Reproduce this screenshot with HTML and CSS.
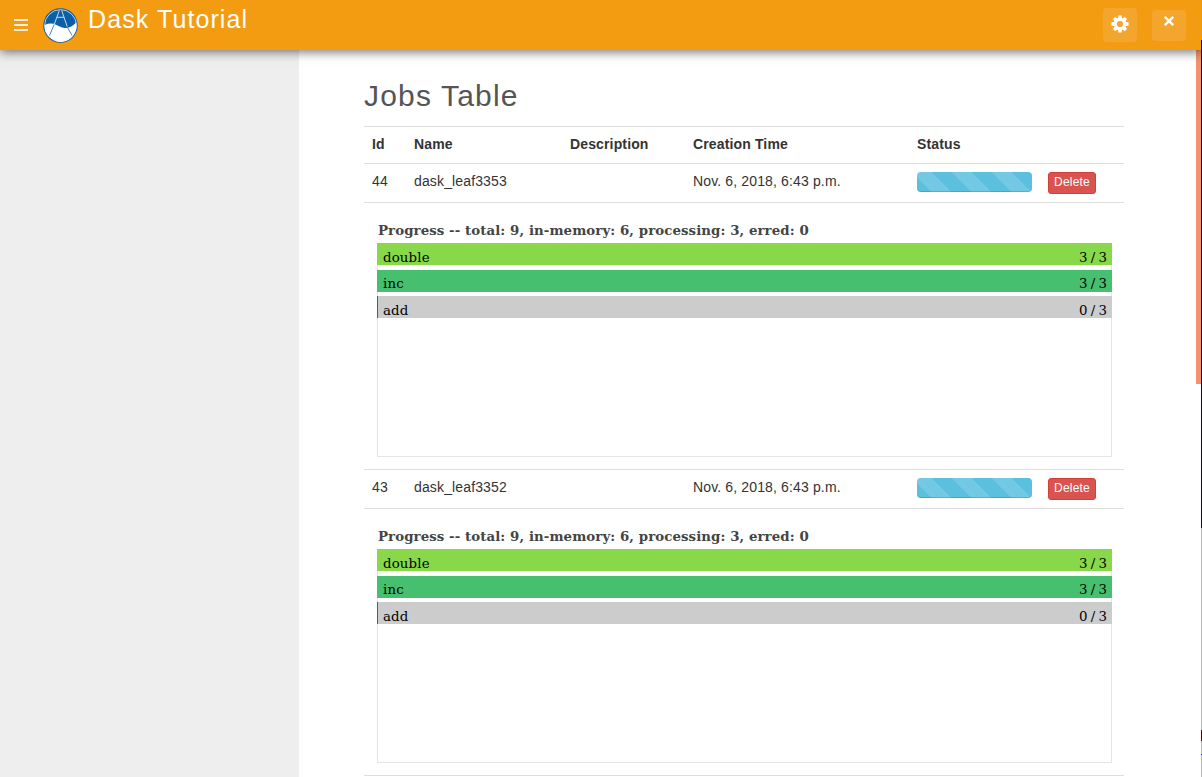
FILE: index.html
```html
<!DOCTYPE html>
<html lang="en">
<head>
<meta charset="utf-8">
<title>Dask Tutorial</title>
<link rel="stylesheet" href="styles.css">
</head>
<body>
<header class="topbar">
  <svg class="menu" width="14" height="12" viewBox="0 0 14 12"><path d="M0 0h14v2H0zM0 5h14v2H0zM0 10h14v2H0z" fill="#f5eedd"/></svg>
  <svg class="logo" width="35" height="35" viewBox="0 0 35 35">
    <circle cx="17.5" cy="17.5" r="17.2" fill="#0b5ea8"/>
    <circle cx="17.5" cy="17.5" r="15.9" fill="#0b5ea8" stroke="#e6eff6" stroke-width=".8"/>
    <path d="M1.6 17Q8 14.2 13.5 17T22 20Q28 20 33.2 14.5A16 16 0 1 1 1.6 17z" fill="#fff"/>
    <path d="M16.3 2.5 11.2 16.5M18.7 2.5 24.2 18.5M14 9.3h7" stroke="#c7dcec" stroke-width="1" fill="none"/>
    <path d="M11.2 16.5 6.5 27.5M24 18.5 29 27.5" stroke="#4a88bd" stroke-width="1" fill="none"/>
  </svg>
  <h1 class="brand">Dask Tutorial</h1>
  <button class="tool settings" aria-label="Settings"><svg width="18" height="18" viewBox="-9 -9 18 18"><g fill="#fff"><path d="M-1.7-8.6h3.4L2.2 0h-4.4zM-1.7 8.6h3.4L2.2 0h-4.4zM-8.6-1.7v3.4L0 2.2v-4.4zM8.6-1.7v3.4L0 2.2v-4.4z"/><path transform="rotate(45)" d="M-1.7-8.4h3.4L2.2 0h-4.4zM-1.7 8.4h3.4L2.2 0h-4.4zM-8.4-1.7v3.4L0 2.2v-4.4zM8.4-1.7v3.4L0 2.2v-4.4z"/><circle r="6.2"/></g><circle r="3.1" fill="#f4a52d"/></svg></button>
  <button class="tool close" aria-label="Close"><svg width="10" height="10" viewBox="0 0 10 10"><path d="M.8.8l8.4 8.4M9.2.8.8 9.2" stroke="#fff" stroke-width="2.3"/></svg></button>
</header>
<div class="page">
  <aside class="sidebar"></aside>
  <main class="content">
    <h2 class="title">Jobs Table</h2>
    <table class="jobs">
      <colgroup><col class="c-id"><col class="c-name"><col class="c-desc"><col class="c-time"><col class="c-status"><col></colgroup>
      <thead><tr><th>Id</th><th>Name</th><th>Description</th><th>Creation Time</th><th>Status</th><th></th></tr></thead>
      <tbody>
        <tr class="job"><td>44</td><td>dask_leaf3353</td><td></td><td>Nov. 6, 2018, 6:43 p.m.</td><td><div class="progress"></div></td><td><button class="delete">Delete</button></td></tr>
        <tr class="detail"><td colspan="6">
          <div class="plot-title">Progress -- total: 9, in-memory: 6, processing: 3, erred: 0</div>
          <div class="plot">
            <div class="bar double"><span>double</span><span class="count">3 / 3</span></div>
            <div class="bar inc"><span>inc</span><span class="count">3 / 3</span></div>
            <div class="bar add"><span>add</span><span class="count">0 / 3</span></div>
          </div>
        </td></tr>
        <tr class="job"><td>43</td><td>dask_leaf3352</td><td></td><td>Nov. 6, 2018, 6:43 p.m.</td><td><div class="progress"></div></td><td><button class="delete">Delete</button></td></tr>
        <tr class="detail"><td colspan="6">
          <div class="plot-title">Progress -- total: 9, in-memory: 6, processing: 3, erred: 0</div>
          <div class="plot">
            <div class="bar double"><span>double</span><span class="count">3 / 3</span></div>
            <div class="bar inc"><span>inc</span><span class="count">3 / 3</span></div>
            <div class="bar add"><span>add</span><span class="count">0 / 3</span></div>
          </div>
        </td></tr>
        <tr class="job"><td></td><td></td><td></td><td></td><td></td><td></td></tr>
      </tbody>
    </table>
  </main>
  <div class="scroll"></div>
</div>
<div class="edge"></div>
</body>
</html>
```
FILE: styles.css
```css
* { box-sizing: border-box; }
body {
  margin: 0;
  height: 777px;
  overflow: hidden;
  position: relative;
  background: #fff;
  color: #333;
  font: 14px/18px "Liberation Sans", Arial, sans-serif;
}
.topbar {
  position: relative;
  z-index: 1;
  display: flex;
  align-items: flex-start;
  height: 50px;
  padding: 0 16px 0 14px;
  background: #f39c12;
  box-shadow: 0 2px 10px rgba(0, 0, 0, .55);
}
.menu { margin-top: 19px; }
.logo { margin: 8px 10px 0 15px; }
.brand {
  margin: 4px auto 0 0;
  color: #fff;
  font-size: 25px;
  font-weight: 400;
  line-height: 30px;
  letter-spacing: 1.1px;
}
.tool {
  display: flex;
  justify-content: center;
  width: 34px;
  padding: 0;
  border: 0;
  border-radius: 4px;
  background: #f4a52d;
}
.settings { height: 34px; margin-top: 8px; padding-top: 7px; }
.close { height: 31px; margin: 10px 0 0 15px; padding-top: 6px; }
.page { display: flex; height: 727px; }
.sidebar { width: 299px; background: #eee; }
.content { width: 760px; margin-left: 65px; }
.title {
  margin: 28px 0 12px;
  height: 36px;
  color: #555;
  font-size: 30px;
  font-weight: 400;
  line-height: 36px;
  letter-spacing: 1.18px;
}
.jobs { width: 760px; table-layout: fixed; border-spacing: 0; }
.c-id { width: 42px; }
.c-name { width: 156px; }
.c-desc { width: 123px; }
.c-time { width: 224px; }
.c-status { width: 131px; }
.jobs th, .jobs td {
  padding: 8px 8px 0;
  border-top: 1px solid #ddd;
  text-align: left;
  vertical-align: top;
  white-space: nowrap;
  letter-spacing: .14px;
}
.jobs th { height: 37px; }
.jobs .job td { height: 39px; }
.jobs .detail td { height: 267px; padding: 17px 12px 0 13px; }
.progress {
  width: 115px;
  height: 20px;
  border-radius: 4px;
  background: #5bc0de linear-gradient(45deg, rgba(255,255,255,.15) 25%, transparent 25%, transparent 50%, rgba(255,255,255,.15) 50%, rgba(255,255,255,.15) 75%, transparent 75%) -5px 0 / 40px 40px;
  box-shadow: inset 0 -1px 0 rgba(0, 0, 0, .15);
}
.delete {
  display: block;
  width: 48px;
  height: 22px;
  padding: 0 0 2px;
  border: 1px solid #d43f3a;
  border-radius: 3px;
  background: #d9534f;
  color: #fff;
  font: 12px/18px "Liberation Sans", Arial, sans-serif;
  letter-spacing: .2px;
}
.plot-title {
  height: 23px;
  padding-left: 1px;
  color: #444;
  font: bold 13.333px/21px "DejaVu Serif", serif;
  letter-spacing: .08px;
}
.plot {
  height: 214px;
  border: 1px solid #e5e5e5;
  border-top: 0;
}
.bar {
  display: flex;
  justify-content: space-between;
  height: 22px;
  margin: 0 -1px 4.5px;
  padding: 0 5px 0 6px;
  color: #000;
  font: 13.333px/29px "DejaVu Serif", serif;
}
.count { letter-spacing: 0; word-spacing: -1px; }
.double { background: #88d84a; }
.inc { background: #46c06f; line-height: 28px; }
.add { background: #ccc; border-left: 1px solid #30678d; padding-left: 5px; }
.scroll { width: 5px; height: 334px; margin-left: 72px; background: #f4926d; }
.edge {
  position: absolute;
  z-index: 2;
  top: 0;
  right: 0;
  width: 1px;
  height: 777px;
  background: linear-gradient(#c99b51 0 40px, #15101d 40px 528px, #bbb 528px 730px, #3b100d 730px 741px, #bbb 741px 754px, #2018bb 754px 755px, #bbb 755px);
}
```
